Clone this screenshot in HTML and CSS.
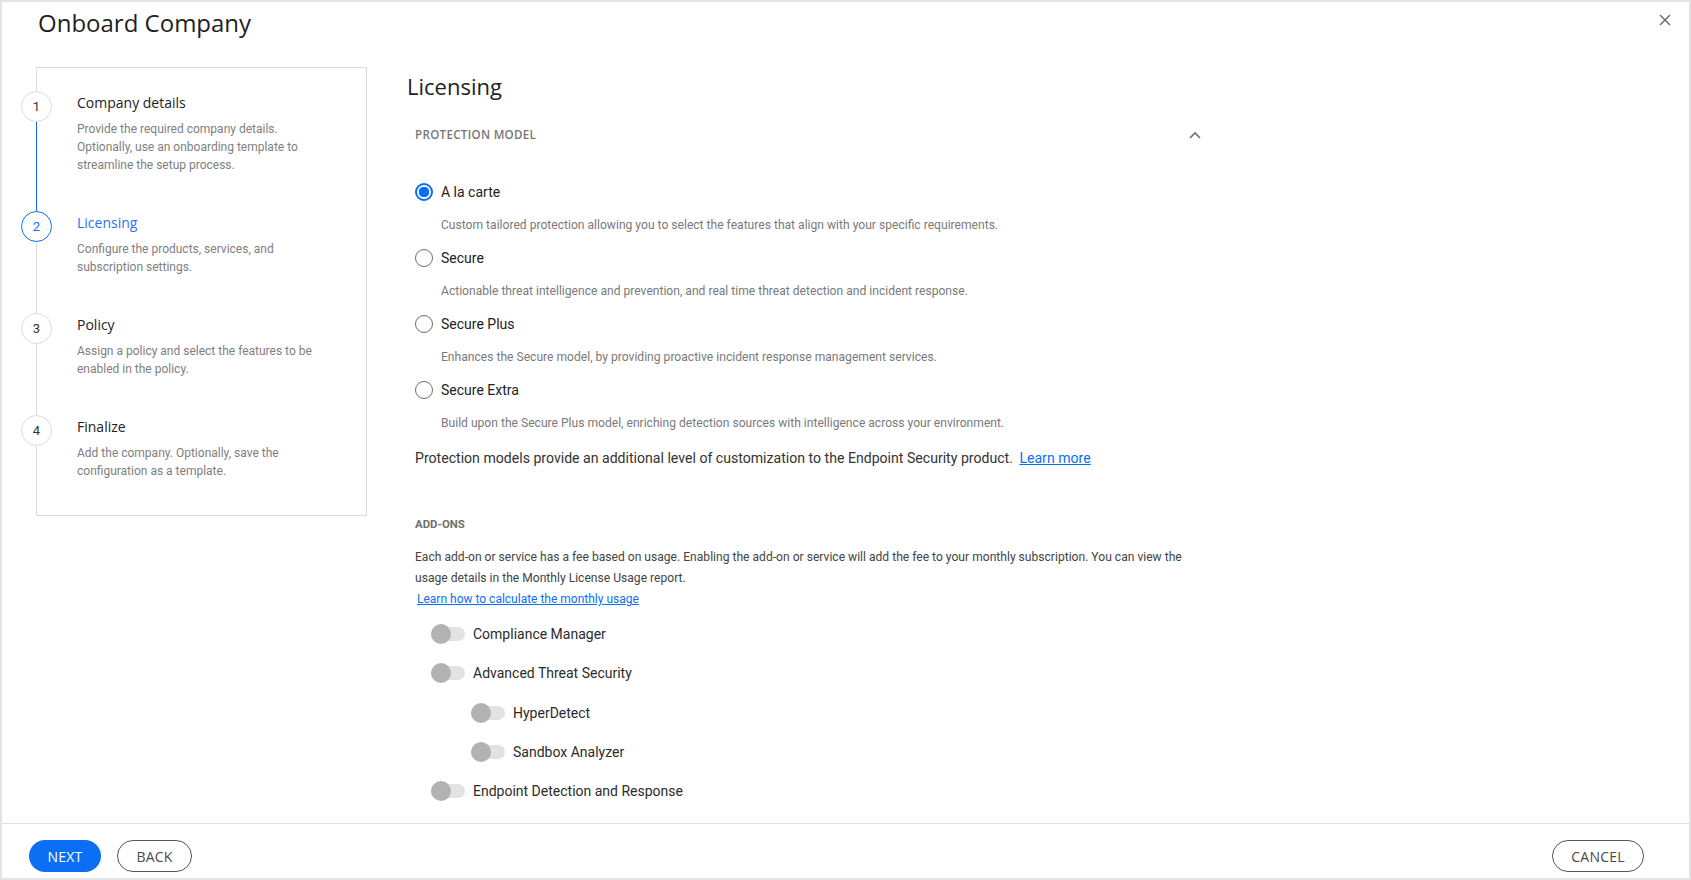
FILE: index.html
```html
<!DOCTYPE html>
<html lang="en">
<head>
    <meta charset="UTF-8">
    <meta name="viewport" content="width=device-width, initial-scale=1.0">
    <title>Onboard Company</title>
    <link rel="stylesheet" href="styles.css">
</head>
<body>
    <div class="dialog">
        <div class="dialog-header">
            <h1>Onboard Company</h1>
            <button class="close-btn" aria-label="Close">
                <svg width="12" height="12" viewBox="0 0 12 12"><path d="M1 1L11 11M11 1L1 11" stroke="#6f6f6f" stroke-width="1.5" fill="none"/></svg>
            </button>
        </div>

        <div class="dialog-body">
            <div class="stepper">
                <div class="step done">
                    <span class="step-num">1</span>
                    <div class="step-title">Company details</div>
                    <div class="step-desc">Provide the required company details. Optionally, use an onboarding template to streamline the setup process.</div>
                </div>
                <div class="step active">
                    <span class="step-num">2</span>
                    <div class="step-title">Licensing</div>
                    <div class="step-desc">Configure the products, services, and subscription settings.</div>
                </div>
                <div class="step">
                    <span class="step-num">3</span>
                    <div class="step-title">Policy</div>
                    <div class="step-desc">Assign a policy and select the features to be enabled in the policy.</div>
                </div>
                <div class="step">
                    <span class="step-num">4</span>
                    <div class="step-title">Finalize</div>
                    <div class="step-desc">Add the company. Optionally, save the configuration as a template.</div>
                </div>
            </div>

            <div class="content">
                <h2>Licensing</h2>

                <div class="section">
                    <div class="section-head">
                        <span>Protection model</span>
                        <svg width="12" height="8" viewBox="0 0 12 8"><path d="M1 7L6 2L11 7" stroke="#707070" stroke-width="1.6" fill="none"/></svg>
                    </div>

                    <div class="radio-list">
                        <div class="radio-option">
                            <label class="radio-row"><span class="radio checked"></span>A la carte</label>
                            <div class="radio-desc">Custom tailored protection allowing you to select the features that align with your specific requirements.</div>
                        </div>
                        <div class="radio-option">
                            <label class="radio-row"><span class="radio"></span>Secure</label>
                            <div class="radio-desc">Actionable threat intelligence and prevention, and real time threat detection and incident response.</div>
                        </div>
                        <div class="radio-option">
                            <label class="radio-row"><span class="radio"></span>Secure Plus</label>
                            <div class="radio-desc">Enhances the Secure model, by providing proactive incident response management services.</div>
                        </div>
                        <div class="radio-option">
                            <label class="radio-row"><span class="radio"></span>Secure Extra</label>
                            <div class="radio-desc">Build upon the Secure Plus model, enriching detection sources with intelligence across your environment.</div>
                        </div>
                    </div>

                    <p class="model-note">Protection models provide an additional level of customization to the Endpoint Security product. <a href="#">Learn more</a></p>

                    <div class="addons-title">ADD-ONS</div>
                    <p class="addons-text">Each add-on or service has a fee based on usage. Enabling the add-on or service will add the fee to your monthly subscription. You can view the usage details in the Monthly License Usage report.</p>
                    <a class="addons-link" href="#">Learn how to calculate the monthly usage</a>

                    <div class="toggle-list">
                        <div class="toggle-row"><span class="toggle"></span>Compliance Manager</div>
                        <div class="toggle-row"><span class="toggle"></span>Advanced Threat Security</div>
                        <div class="toggle-row sub"><span class="toggle"></span>HyperDetect</div>
                        <div class="toggle-row sub"><span class="toggle"></span>Sandbox Analyzer</div>
                        <div class="toggle-row"><span class="toggle"></span>Endpoint Detection and Response</div>
                    </div>
                </div>
            </div>
        </div>

        <div class="dialog-footer">
            <div class="footer-left">
                <button class="btn btn-primary">Next</button>
                <button class="btn btn-outline">Back</button>
            </div>
            <button class="btn btn-outline btn-cancel">Cancel</button>
        </div>
    </div>
</body>
</html>
```

FILE: styles.css
```css
:root {
    --blue: #0b6ff4;
    --line: #e1e1e1;
    --muted: #7a7a7a;
    --text: #2b2b2b;
}

* {
    box-sizing: border-box;
    margin: 0;
    padding: 0;
}

body {
    background: #fff;
    font-family: Roboto, "Noto Sans", sans-serif;
    color: var(--text);
}

.dialog {
    width: 1691px;
    height: 880px;
    border: 2px solid #e3e3e3;
    display: flex;
    flex-direction: column;
    overflow: hidden;
}

.dialog-header {
    height: 65px;
    flex-shrink: 0;
    display: flex;
    justify-content: space-between;
    align-items: flex-start;
    padding: 5px 18px 0 36px;
}

.dialog-header h1 {
    font-family: "Open Sans", sans-serif;
    font-size: 24px;
    font-weight: 400;
    line-height: 32px;
    color: #1f1f1f;
}

.close-btn {
    border: none;
    background: none;
    margin-top: 7px;
    width: 12px;
    height: 12px;
    cursor: pointer;
    display: flex;
}

.dialog-body {
    flex: 1;
    display: flex;
    gap: 40px;
    padding-left: 34px;
    overflow: hidden;
}

/* stepper */
.stepper {
    width: 331px;
    height: 449px;
    flex-shrink: 0;
    border: 1px solid #dcdcdc;
    padding: 25px 20px 0 0;
}

.step {
    position: relative;
    padding-left: 40px;
    margin-bottom: 39px;
}

.step-num {
    position: absolute;
    left: -16px;
    top: -2px;
    width: 31px;
    height: 31px;
    border-radius: 50%;
    border: 1px solid #dcdcdc;
    background: #fff;
    display: grid;
    place-items: center;
    font-size: 13px;
    color: #333;
    z-index: 1;
}

.step.done::after {
    content: "";
    position: absolute;
    left: -1.5px;
    top: 28px;
    width: 1.5px;
    height: 92px;
    background: var(--blue);
}

.step.active .step-num {
    border: 1.5px solid var(--blue);
    color: var(--blue);
}

.step-title {
    font-family: "Open Sans", sans-serif;
    font-size: 14px;
    line-height: 20px;
    color: #222;
    margin-bottom: 7px;
}

.step.active .step-title {
    color: #2f72ec;
}

.step-desc {
    max-width: 244px;
    font-size: 12px;
    line-height: 18px;
    color: #808080;
}

/* content */
.content {
    width: 800px;
    padding-top: 4px;
}

.content h2 {
    font-family: "Open Sans", sans-serif;
    font-size: 22px;
    font-weight: 400;
    line-height: 30px;
    color: #222;
    margin-bottom: 23px;
}

.section {
    padding-left: 8px;
}

.section-head {
    display: flex;
    justify-content: space-between;
    align-items: center;
    height: 20px;
    padding-right: 6px;
    font-family: "Open Sans", sans-serif;
    font-size: 11.6px;
    font-weight: 600;
    letter-spacing: 0.3px;
    text-transform: uppercase;
    color: #777;
}

.section-head svg {
    margin-top: 1px;
}

.radio-list {
    margin-top: 38px;
}

.radio-option {
    margin-bottom: 15px;
}

.radio-option:last-child {
    margin-bottom: 0;
}

.radio-row {
    display: flex;
    align-items: center;
    gap: 8px;
    height: 20px;
    font-size: 14px;
    color: #222;
}

.radio {
    width: 18px;
    height: 18px;
    border-radius: 50%;
    border: 1.6px solid #6c6c6c;
    flex-shrink: 0;
}

.radio.checked {
    border: 2px solid var(--blue);
    background: radial-gradient(circle, var(--blue) 0 5px, #fff 5.5px);
}

.radio-desc {
    margin-top: 15px;
    padding-left: 26px;
    font-size: 12.1px;
    line-height: 16px;
    color: #7a7a7a;
}

.model-note {
    margin-top: 17px;
    font-size: 14.1px;
    line-height: 20px;
    color: #333;
}

.model-note a {
    margin-left: 3px;
}

a {
    color: var(--blue);
    text-decoration: underline;
}

.addons-title {
    margin-top: 48px;
    font-size: 11.4px;
    font-weight: 700;
    line-height: 16px;
    color: #6f6f6f;
}

.addons-text {
    margin-top: 15px;
    width: 792px;
    font-size: 12.1px;
    line-height: 21px;
    color: #444;
}

.addons-link {
    display: block;
    margin-left: 2px;
    font-size: 12px;
    line-height: 20px;
}

.toggle-list {
    margin-top: 15px;
    display: flex;
    flex-direction: column;
    gap: 19.3px;
}

.toggle-row {
    display: flex;
    align-items: center;
    gap: 8px;
    height: 20px;
    padding-left: 16px;
    font-size: 14px;
    color: #2b2b2b;
}

.toggle-row.sub {
    padding-left: 56px;
}

.toggle {
    position: relative;
    width: 34px;
    height: 14px;
    border-radius: 7px;
    background: #e2e2e2;
    flex-shrink: 0;
}

.toggle::before {
    content: "";
    position: absolute;
    left: 0;
    top: -3px;
    width: 20px;
    height: 20px;
    border-radius: 50%;
    background: #b2b2b2;
}

/* footer */
.dialog-footer {
    height: 55px;
    flex-shrink: 0;
    border-top: 1px solid var(--line);
    display: flex;
    justify-content: space-between;
    align-items: flex-start;
    padding: 16px 45px 0 27px;
}

.footer-left {
    display: flex;
    gap: 16px;
}

.btn {
    height: 32px;
    border-radius: 16px;
    font-family: "Open Sans", sans-serif;
    font-size: 14px;
    letter-spacing: 0.2px;
    text-transform: uppercase;
    cursor: pointer;
    background: #fff;
}

.btn-primary {
    width: 72px;
    border: none;
    background: var(--blue);
    color: #fff;
}

.btn-outline {
    width: 75px;
    border: 1px solid #555;
    color: #4a4a4a;
}

.btn-cancel {
    width: 92px;
}
```
